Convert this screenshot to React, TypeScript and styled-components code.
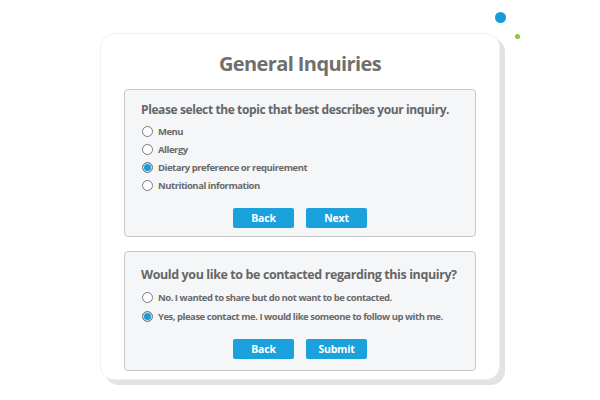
import React from "react";
import styled, { createGlobalStyle } from "styled-components";

const GlobalStyle = createGlobalStyle`
  html, body { margin: 0; padding: 0; background: #ffffff; }
  body { font-family: "Open Sans", "Noto Sans", sans-serif; }
  * { box-sizing: border-box; }
`;

const Stage = styled.div`
  position: relative;
  width: 600px;
  height: 400px;
  padding: 33px 0 0 100px;
  overflow: hidden;
`;

const Dot = styled.span<{ $x: number; $y: number; $size: number; $color: string }>`
  position: absolute;
  left: ${(p) => p.$x - p.$size / 2}px;
  top: ${(p) => p.$y - p.$size / 2}px;
  width: ${(p) => p.$size}px;
  height: ${(p) => p.$size}px;
  border-radius: 50%;
  background: ${(p) => p.$color};
`;

const Card = styled.div`
  width: 400px;
  height: 347px;
  background: #ffffff;
  border: 1px solid #f1f1f1;
  border-radius: 14px;
  box-shadow: 5px 5px 0 #e3e3e3;
  padding: 16px 23px 0;
  display: flex;
  flex-direction: column;
`;

const Title = styled.h1`
  margin: 0 0 11px;
  text-align: center;
  font-size: 20px;
  line-height: 28px;
  font-weight: 700;
  letter-spacing: -0.6px;
  color: #6f6f6f;
`;

const Panel = styled.section<{ $pt: number; $pb: number; $gap: number }>`
  border: 1px solid #c9c9c9;
  border-radius: 4px;
  background: #f5f6f8;
  padding: ${(p) => p.$pt}px 16px ${(p) => p.$pb}px;
  margin-bottom: ${(p) => p.$gap}px;
  display: flex;
  flex-direction: column;
`;

const Question = styled.h2<{ $size: number }>`
  margin: 0;
  font-size: ${(p) => p.$size}px;
  line-height: 18px;
  font-weight: 700;
  letter-spacing: -0.4px;
  color: #666666;
  white-space: nowrap;
`;

const Options = styled.div<{ $mt: number }>`
  margin-top: ${(p) => p.$mt}px;
  display: flex;
  flex-direction: column;
`;

const Option = styled.label<{ $h: number }>`
  height: ${(p) => p.$h}px;
  display: flex;
  align-items: center;
  gap: 5px;
  font-size: 9.5px;
  font-weight: 700;
  letter-spacing: -0.48px;
  color: #6a6a6a;
  white-space: nowrap;
`;

const Radio = styled.input.attrs({ type: "radio" })`
  appearance: none;
  margin: 0 0 0 1px;
  width: 11px;
  height: 11px;
  flex: none;
  border-radius: 50%;
  border: 1px solid #7a7a7a;
  background: #ffffff;
  &:checked {
    background: #1b9ad7;
    box-shadow: inset 0 0 0 1px #dfe9ef;
  }
`;

const Buttons = styled.div<{ $mt: number }>`
  margin-top: ${(p) => p.$mt}px;
  display: flex;
  justify-content: center;
  gap: 12px;
`;

const Button = styled.button`
  width: 61px;
  height: 20px;
  border: none;
  border-radius: 2px;
  background: #1ba1dc;
  color: #ffffff;
  font-family: "Open Sans", "Noto Sans", sans-serif;
  font-size: 10.5px;
  font-weight: 700;
  letter-spacing: -0.2px;
  padding: 0;
  cursor: pointer;
`;

const topics = [
  "Menu",
  "Allergy",
  "Dietary preference or requirement",
  "Nutritional information",
];

const contactChoices = [
  "No. I wanted to share but do not want to be contacted.",
  "Yes, please contact me. I would like someone to follow up with me.",
];

export default function App() {
  return (
    <>
      <GlobalStyle />
      <Stage>
        <Dot $x={500} $y={17} $size={11} $color="#1b9ad7" />
        <Dot $x={517} $y={36} $size={5} $color="#8cc63f" />
        <Card>
          <Title>General Inquiries</Title>
          <Panel $pt={11} $pb={8} $gap={14}>
            <Question $size={12}>Please select the topic that best describes your inquiry.</Question>
            <Options $mt={3}>
              {topics.map((t, i) => (
                <Option key={t} $h={18}>
                  <Radio name="topic" defaultChecked={i === 2} />
                  {t}
                </Option>
              ))}
            </Options>
            <Buttons $mt={14}>
              <Button>Back</Button>
              <Button>Next</Button>
            </Buttons>
          </Panel>
          <Panel $pt={14} $pb={11} $gap={0}>
            <Question $size={12.5}>Would you like to be contacted regarding this inquiry?</Question>
            <Options $mt={4}>
              {contactChoices.map((t, i) => (
                <Option key={t} $h={19}>
                  <Radio name="contact" defaultChecked={i === 1} />
                  {t}
                </Option>
              ))}
            </Options>
            <Buttons $mt={13}>
              <Button>Back</Button>
              <Button>Submit</Button>
            </Buttons>
          </Panel>
        </Card>
      </Stage>
    </>
  );
}
